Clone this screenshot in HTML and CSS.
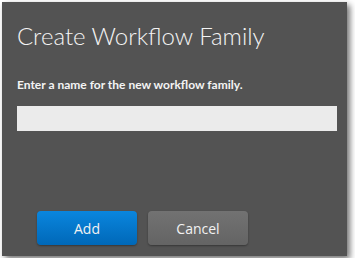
FILE: index.html
```html
<!DOCTYPE html>
<html lang="en">
<head>
   <meta charset="UTF-8">
   <title>Create Workflow Family</title>
   <link rel="stylesheet" href="styles.css">
</head>
<body>
   <div class="dialog flex column">
      <h1>Create Workflow Family</h1>
      <label for="familyname">Enter a name for the new workflow family.</label>
      <input type="text" id="familyname" class="nooutline">
      <div class="buttons flex">
         <button class="btn add">Add</button>
         <button class="btn cancel">Cancel</button>
      </div>
   </div>
</body>
</html>
```

FILE: styles.css
```css
/** Commun */
* { padding: 0;
    margin: 0;
    box-sizing: border-box;
    font-family: Lato, sans-serif;
}
body {
   background-color: white;
}
.flex { display: flex;}
.column { flex-direction: column;}

.dialog {
   width: 345px;
   height: 254px;
   margin: 2px;
   padding: 0 10px 0 15px;
   background-color: #535353;
   box-shadow: 3px 3px 6px rgba(0,0,0,0.55);
}
h1 {
   color: #f4f4f4;
   font-weight: 300;
   font-size: 24px;
   line-height: 30px;
   margin-top: 19px;
}
label {
   color: #f4f4f4;
   font-weight: bold;
   font-size: 12px;
   line-height: 15px;
   margin-top: 26px;
}
input[type="text"] {
   height: 25px;
   margin-top: 14px;
   border: none;
   background-color: #ebebeb;
}
.nooutline {
   outline: none;
}
.buttons {
   margin-top: auto;
   margin-bottom: 11px;
   padding-left: 20px;
   gap: 11px;
}
.btn {
   width: 100px;
   height: 34px;
   border: none;
   border-radius: 4px;
   color: #f2f2f2;
   font-family: "Open Sans", sans-serif;
   font-size: 14px;
   box-shadow: 0 1px 2px rgba(0,0,0,0.35);
}
.add {
   background: linear-gradient(#0a86de, #0068b8);
}
.cancel {
   background: linear-gradient(#727272, #646464);
}
```
